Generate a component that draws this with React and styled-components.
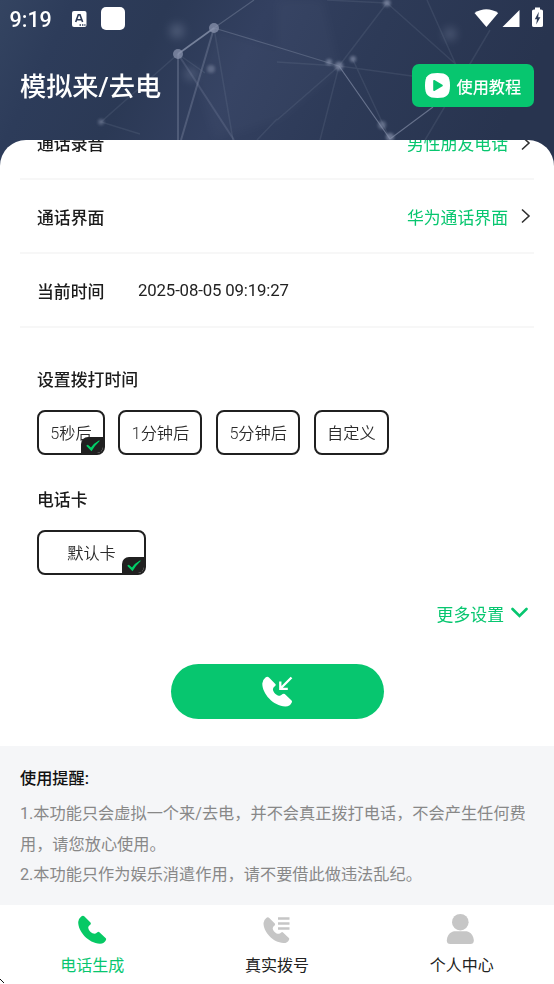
import React from "react";
import styled, { createGlobalStyle } from "styled-components";

const GREEN = "#07c66f";

const GlobalStyle = createGlobalStyle`
  * { box-sizing: border-box; }
  body { margin: 0; background: #fff; }
  button { font: inherit; border: 0; padding: 0; background: none; color: inherit; }
`;

const Screen = styled.div`
  width: 554px;
  height: 984px;
  display: flex;
  flex-direction: column;
  position: relative;
  isolation: isolate;
  overflow: hidden;
  background: #fff;
  color: #1c1c1c;
  font-family: Roboto, "Noto Sans CJK SC", sans-serif;
  font-size: 16.85px;
`;

const Backdrop = styled.svg`
  position: absolute;
  top: 0;
  left: 0;
  z-index: -1;
`;

const StatusBar = styled.div`
  height: 37px;
  flex: none;
  display: flex;
  align-items: center;
  padding: 0 10px 0 9.5px;
  color: #fff;
`;

const Clock = styled.span`
  font-size: 21.5px;
  line-height: 37px;
  font-weight: 500;
  width: 62.5px;
  padding-top: 2px;
`;

const AppBadge = styled.span`
  width: 24px;
  height: 23px;
  border-radius: 5px;
  background: #fff;
  margin-left: 14px;
`;

const StatusIcons = styled.svg`
  margin-left: auto;
  margin-bottom: 1px;
`;

const TitleBar = styled.header`
  height: 103px;
  flex: none;
  display: flex;
  justify-content: space-between;
  align-items: flex-start;
  padding: 27px 20px 0;
  color: #fff;
`;

const Title = styled.h1`
  margin: 0;
  padding-top: 1px;
  font-size: 26.2px;
  line-height: 44px;
  font-weight: 500;
`;

const TutorialButton = styled.button`
  && {
    width: 122.5px;
    height: 43px;
    border-radius: 7px;
    background: ${GREEN};
    display: flex;
    align-items: center;
    padding-left: 13px;
    gap: 7px;
    font-size: 16.2px;
    font-weight: 500;
    white-space: nowrap;
  }
`;

const Panel = styled.main`
  height: 606px;
  flex: none;
  overflow: hidden;
  border-radius: 26px 26px 0 0;
  background: #fff;
  display: flex;
  flex-direction: column;
`;

const Settings = styled.div`
  margin: -33.5px 20px 0;
  flex: none;
`;

const Row = styled.div`
  height: 73.75px;
  display: flex;
  align-items: center;
  padding: 0.6px 3px 0 17px;
  border-bottom: 2px solid #f7f7f7;
`;

const Label = styled.span`
  font-weight: 500;
  width: 101px;
`;

const Choice = styled.span`
  margin-left: auto;
  display: flex;
  align-items: center;
  gap: 13px;
  color: ${GREEN};
`;

const Time = styled.span`
  font-size: 16.8px;
  letter-spacing: -0.15px;
  color: #222;
`;

const Group = styled.section`
  padding-left: 37px;
  margin-top: ${(p) => p.$gap}px;
`;

const GroupTitle = styled.h2`
  margin: 0 0 17px;
  font-size: 16.85px;
  line-height: 26px;
  font-weight: 500;
`;

const Chips = styled.div`
  display: flex;
  gap: 13.7px;
`;

const ChipBox = styled.button`
  && {
    position: relative;
    width: ${(p) => p.$width}px;
    height: 45px;
    border: 2px solid #202020;
    border-radius: 8px;
    font-size: 16.2px;
    font-weight: 350;
    line-height: 41px;
    white-space: nowrap;
    color: #2b2b2b;
    padding-top: 1px;
    overflow: hidden;
  }
`;

const CheckMark = styled.span`
  position: absolute;
  right: -2px;
  bottom: -2px;
  width: 24px;
  height: 18px;
  background: #202020;
  border-radius: 7px 0 0 0;
  svg { display: block; }
`;

const More = styled.div`
  display: flex;
  justify-content: flex-end;
  align-items: center;
  gap: 7px;
  margin-top: 25px;
  padding-right: 26px;
  height: 28px;
  color: ${GREEN};
`;

const CallButton = styled.button`
  && {
    width: 213px;
    height: 55.5px;
    margin: 36px 0 0 171px;
    border-radius: 28px;
    background: ${GREEN};
    display: flex;
    align-items: center;
    justify-content: center;
    flex: none;
  }
`;

const Notice = styled.section`
  height: 159px;
  flex: none;
  padding: 18px 20px 0;
  background: #f5f6f8;
  font-size: 16.2px;
  line-height: 30.6px;
  color: #888;
`;

const NoticeTitle = styled.h2`
  margin: 0 0 5px;
  font-size: 16.2px;
  line-height: 30px;
  font-weight: 500;
  color: #111;
`;

const NoticeText = styled.p`
  margin: 0;
  width: 516px;
`;

const TabBar = styled.nav`
  flex: 1;
  display: grid;
  grid-template-columns: repeat(3, 1fr);
  background: #fff;
`;

const Tab = styled.button`
  && {
    display: flex;
    flex-direction: column;
    align-items: center;
    padding-top: 7px;
    font-size: 16px;
    line-height: 26px;
    color: ${(p) => (p.$active ? GREEN : "#222")};
  }
  svg { margin-bottom: 9px; }
`;

const CornerMark = styled.svg`
  position: absolute;
  left: 0;
  bottom: 0;
`;

const HANDSET =
  "M3 .8 Q4.8-.7 6.3.8L12.3 6.8Q13.1 7.7 12.3 8.6Q10 10.2 10 11.8C10.2 14.7 13.4 18 16.6 18Q17.9 17.7 19.2 16.4Q20.3 15.6 21.2 16.4L27.6 22.5Q28.3 23.3 27.8 24.3Q26.2 28 21.8 28C10 27.6-.2 15.5 0 6.3Q.4 2.8 3 .8Z";

const Arrow = () => (
  <svg width="10" height="16" viewBox="0 0 10 16">
    <path d="M1 1.5L8 8L1 14.5" fill="none" stroke="#303030" strokeWidth="1.6" />
  </svg>
);

const Chip = ({ width, selected, children }) => (
  <ChipBox $width={width}>
    {children}
    {selected && (
      <CheckMark>
        <svg width="24" height="18" viewBox="0 0 24 18">
          <path d="M5.2 8.7L6.8 7.7L10 10.6Q13 6 18.2 3.2L18.7 4Q13.8 8.5 10.5 14.2Z" fill="#00ce67" />
        </svg>
      </CheckMark>
    )}
  </ChipBox>
);

const rows = [
  { label: "通话录音", value: "男性朋友电话" },
  { label: "通话界面", value: "华为通话界面" },
];

const delays = [
  { text: "5秒后", width: 67.8, selected: true },
  { text: "1分钟后", width: 84 },
  { text: "5分钟后", width: 84 },
  { text: "自定义", width: 75 },
];

const Network = () => (
  <Backdrop width="554" height="170" viewBox="0 0 554 170">
    <defs>
      <linearGradient id="sky" x1="0" x2="1" y1="0" y2="0.15">
        <stop offset="0" stopColor="#344461" />
        <stop offset=".13" stopColor="#2d3c5a" />
        <stop offset=".3" stopColor="#2b3955" />
        <stop offset=".48" stopColor="#334060" />
        <stop offset=".7" stopColor="#2d3a57" />
        <stop offset="1" stopColor="#28344f" />
      </linearGradient>
      <filter id="soft" x="-100%" y="-100%" width="300%" height="300%">
        <feGaussianBlur stdDeviation="1.8" />
      </filter>
      <filter id="glow" x="-100%" y="-100%" width="300%" height="300%">
        <feGaussianBlur stdDeviation="5" />
      </filter>
    </defs>
    <rect width="554" height="170" fill="url(#sky)" />
    <g fill="#8793ad" opacity=".05">
      <path d="M277 0H323L338 65L277 120Z" filter="url(#glow)" />
      <path d="M217 30L340 67L277 120L215 140L197 83Z" filter="url(#glow)" />
    </g>
    <g fill="#8490aa" filter="url(#glow)" opacity=".4">
      <circle cx="177" cy="31" r="7" />
      <circle cx="450" cy="34" r="6" />
      <circle cx="191" cy="74" r="6" />
    </g>
    <g stroke="#8e98b0" fill="none" strokeWidth="1.2">
      <path d="M178 54L214 28" strokeWidth="1.6" opacity=".75" />
      <path d="M214 28L254 0M214 28L277 47L339 66" opacity=".36" />
      <path d="M339 66L390 139L433 107" opacity=".6" />
      <path d="M178 54V140M214 28L181 140" opacity=".32" strokeWidth="2" />
      <path d="M178 54L234 140" opacity=".22" strokeWidth="2" />
      <path d="M214 28L233 140M178 54L101 122L140 134M178 54L205 73M387 3L339 66L412 76M387 3L460 68M427 0L456 65M339 66L277 120M339 66L320 140M353 60L390 139M490 30L425 140M277 119L257 140M277 62L339 66M387 3L327 0" opacity=".15" strokeWidth="1.5" />
    </g>
    <g fill="#8993ad">
      <circle cx="178" cy="54" r="5" opacity=".75" />
      <circle cx="214" cy="28" r="5" opacity=".75" />
      <g filter="url(#soft)" opacity=".7">
        <circle cx="387" cy="3" r="3.6" />
        <circle cx="339" cy="66" r="4.2" />
        <circle cx="353" cy="59" r="3" />
        <circle cx="329" cy="62" r="3" />
        <circle cx="382" cy="125" r="4" opacity=".8" />
        <circle cx="390" cy="137" r="4" />
        <circle cx="211" cy="69" r="4" opacity=".7" />
        <circle cx="101" cy="122" r="3" opacity=".7" />
      </g>
    </g>
  </Backdrop>
);

export default function App() {
  return (
    <Screen>
      <GlobalStyle />
      <Network />
      <StatusBar>
        <Clock>9:19</Clock>
        <svg width="15" height="16" viewBox="0 0 15 16">
          <rect width="14.5" height="16" rx="2" fill="#fff" />
          <path d="M3.7 11L6.3 3.8H8L10.6 11M4.8 8.7H9.5" fill="none" stroke="#2b3955" strokeWidth="1.6" />
          <path d="M7.5 14H9M10 14H11.4M12.3 14H13.5" stroke="#2b3955" strokeWidth="1.3" />
        </svg>
        <AppBadge />
        <StatusIcons width="70" height="22" viewBox="0 0 70 22">
          <path d="M.5 6Q12.3-1.5 24.2 6L12.4 20Z" fill="#fff" />
          <path d="M28.5 20L45.5 3V20Z" fill="#fff" />
          <path d="M61 0.5H66V2.5H67Q69 2.5 69 4V18.5Q69 20 67 20H60Q58 20 58 18.5V4Q58 2.5 60 2.5H61Z" fill="#fff" />
          <path d="M64.8 4.8L60.8 12.2H63L62.2 17.5L66.4 10.2H64.2Z" fill="#2b3955" />
        </StatusIcons>
      </StatusBar>
      <TitleBar>
        <Title>模拟来/去电</Title>
        <TutorialButton>
          <svg width="25" height="25" viewBox="0 0 25 25">
            <path d="M12.5 0C22 0 25 3 25 12.5S22 25 12.5 25S0 22 0 12.5S3 0 12.5 0Z" fill="#fff" />
            <path d="M9 7.8L17 12.5L9 17.2Z" fill={GREEN} stroke={GREEN} strokeWidth="1.6" strokeLinejoin="round" />
          </svg>
          使用教程
        </TutorialButton>
      </TitleBar>

      <Panel>
        <Settings>
          {rows.map((r) => (
            <Row key={r.label}>
              <Label>{r.label}</Label>
              <Choice>{r.value}<Arrow /></Choice>
            </Row>
          ))}
          <Row>
            <Label>当前时间</Label>
            <Time>2025-08-05 09:19:27</Time>
          </Row>
        </Settings>

        <Group $gap={39}>
          <GroupTitle>设置拨打时间</GroupTitle>
          <Chips>
            {delays.map((d) => (
              <Chip key={d.text} width={d.width} selected={d.selected}>{d.text}</Chip>
            ))}
          </Chips>
        </Group>

        <Group $gap={32}>
          <GroupTitle>电话卡</GroupTitle>
          <Chips>
            <Chip width={109} selected>默认卡</Chip>
          </Chips>
        </Group>

        <More>
          更多设置
          <svg width="17" height="14" viewBox="0 0 17 14">
            <path d="M1.5 2L8.5 9L15.5 2" fill="none" stroke={GREEN} strokeWidth="2.6" strokeLinecap="round" />
          </svg>
        </More>

        <CallButton aria-label="来电">
          <svg width="31" height="31" viewBox="0 0 31 31">
            <path d={HANDSET} transform="translate(.3 .7) scale(1.06)" fill="#fff" />
            <path d="M29.5 1.5L18.5 12.5M18.3 5.5V12.8H25.8" fill="none" stroke="#fff" strokeWidth="2.3" />
          </svg>
        </CallButton>
      </Panel>

      <Notice>
        <NoticeTitle>使用提醒:</NoticeTitle>
        <NoticeText>1.本功能只会虚拟一个来/去电，并不会真正拨打电话，不会产生任何费用，请您放心使用。</NoticeText>
        <NoticeText>2.本功能只作为娱乐消遣作用，请不要借此做违法乱纪。</NoticeText>
      </Notice>

      <TabBar>
        <Tab $active>
          <svg width="31" height="32" viewBox="0 0 31 32">
            <path d={HANDSET} transform="translate(1.2 3.8)" fill="#07c965" />
          </svg>
          电话生成
        </Tab>
        <Tab>
          <svg width="31" height="32" viewBox="0 0 31 32">
            <path d={HANDSET} transform="translate(2.5 5.3) scale(.92)" fill="#c6c6c6" />
            <path d="M14.5 3.5H31V19H19.5L14.5 14.5Z" fill="#fff" />
            <path d="M17 6.5H28.5M17 11.5H28.5M17 16.5H28.5" stroke="#c6c6c6" strokeWidth="2.5" />
          </svg>
          真实拨号
        </Tab>
        <Tab>
          <svg width="31" height="32" viewBox="0 0 31 32">
            <circle cx="14.3" cy="10.2" r="8.3" fill="#c6c6c6" />
            <path d="M8 19.3H20.6C25 20.2 27.5 24 27.8 28.5Q27.8 32 24.3 32H4.3Q.8 32 .8 28.5C1.1 24 3.6 20.2 8 19.3Z" fill="#c6c6c6" />
          </svg>
          个人中心
        </Tab>
      </TabBar>
      <CornerMark width="5" height="5" viewBox="0 0 5 5" shapeRendering="crispEdges">
        <path d="M0 0H1V1H2V2H3V3H4V4H3V3H2V2H1V1H0Z" fill="#111" />
      </CornerMark>
    </Screen>
  );
}
